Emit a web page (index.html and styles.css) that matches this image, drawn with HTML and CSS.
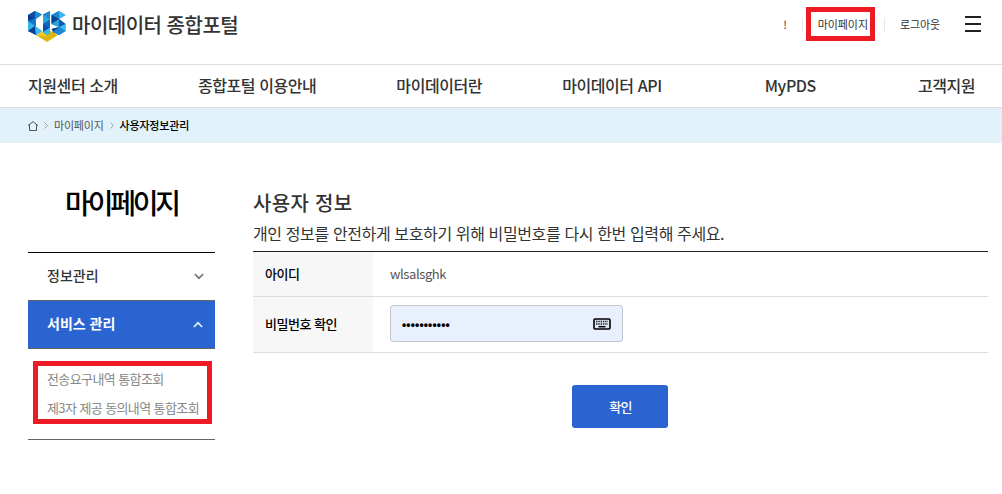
FILE: index.html
```html
<!DOCTYPE html>
<html lang="ko">
<head>
    <meta charset="UTF-8">
    <meta name="viewport" content="width=device-width, initial-scale=1.0">
    <title>마이데이터 종합포털</title>
    <link rel="stylesheet" href="styles.css">
</head>
<body>
    <header class="header">
        <a class="logo" href="#">
            <svg class="logo-mark" width="38" height="31" viewBox="0 0 38 31">
                <path fill="#dcb510" d="M19 18l11 6-11 7-11-7z"/>
                <path fill="#f0cf2c" d="M8 24l11-5v6z"/>
                <path fill="#1a80cf" d="M0 4l7-4 7 3.500L8 8v8l6 4-6 4-8-4zM15 3.500L22 0v22l-3 2-4-3zM23.500 4L31 0l6.500 4L31 8l6.500 5v7L31 24l-6-3-1.500-3 7.500-2-7.500-3z"/>
                <path fill="#0c4ea8" d="M0 4l7-4v8L0 11z"/>
                <path fill="#1c8cd6" d="M7 0l7 3.500L7 8z"/>
                <path fill="#0a3b8c" d="M0 4l7 4-7 3z"/>
                <path fill="#1478c8" d="M0 10l7-3v8z"/>
                <path fill="#35b5ea" d="M0 10l7 5-7 5z"/>
                <path fill="#0b3f95" d="M0 20l7-5 1 9z"/>
                <path fill="#38bdf0" d="M7 15l7 5-6 4z"/>
                <path fill="#1b8ad6" d="M15 3.500L22 0v9z"/>
                <path fill="#29a9e1" d="M15 3.500L22 9l-7 4z"/>
                <path fill="#1268bd" d="M15 13l7-4.500V17z"/>
                <path fill="#0c4ea8" d="M15 13l7 4-7 4z"/>
                <path fill="#35b7ec" d="M15 21l7-4.500V22l-3 2z"/>
                <path fill="#1b85d2" d="M23.500 4L31 0v8z"/>
                <path fill="#36b7ee" d="M31 0l6.500 4L31 8z"/>
                <path fill="#0b438f" d="M23.500 4L31 8l-7.500 5z"/>
                <path fill="#27a4e0" d="M23.500 13L31 8v8z"/>
                <path fill="#0d56ad" d="M31 8l6.500 5-6.500 3z"/>
                <path fill="#38bdf0" d="M31 16l6.500-3v7z"/>
                <path fill="#0c4396" d="M23.500 18l7.500-2v5l-5 1z"/>
                <path fill="#1a88d4" d="M25 21l6-5 6.500 4-6.500 4z"/>
            </svg>
            <span class="logo-text">마이데이터 종합포털</span>
        </a>
        <div class="util">
            <span class="util-name">!</span>
            <a class="util-link marked" href="#">마이페이지</a>
            <a class="util-link" href="#">로그아웃</a>
            <button class="menu-btn" aria-label="전체메뉴"><i></i><i></i><i></i></button>
        </div>
    </header>

    <nav class="gnb">
        <a href="#">지원센터 소개</a>
        <a href="#">종합포털 이용안내</a>
        <a href="#">마이데이터란</a>
        <a href="#">마이데이터 API</a>
        <a class="gnb-wide" href="#">MyPDS</a>
        <a href="#">고객지원</a>
    </nav>

    <div class="breadcrumb">
        <svg class="home" width="10" height="10" viewBox="0 0 10 10"><path d="M0 4.500L5 .7l5 3.800M1.500 3.500v6h7v-6" fill="none" stroke="#555"/></svg>
        <svg class="sep" width="4" height="7" viewBox="0 0 4 7"><path d="M.5.5l3 3-3 3" fill="none" stroke="#98a4ab"/></svg>
        <a href="#">마이페이지</a>
        <svg class="sep" width="4" height="7" viewBox="0 0 4 7"><path d="M.5.5l3 3-3 3" fill="none" stroke="#98a4ab"/></svg>
        <strong>사용자정보관리</strong>
    </div>

    <div class="container">
        <aside class="side">
            <h2 class="side-title">마이페이지</h2>
            <div class="side-menu">
                <a class="side-item" href="#">정보관리
                    <svg width="10" height="7" viewBox="0 0 10 7"><path d="M.8 1L5 5.200 9.200 1" fill="none" stroke="#777" stroke-width="1.700"/></svg>
                </a>
                <a class="side-item active" href="#">서비스 관리
                    <svg width="10" height="7" viewBox="0 0 10 7"><path d="M.8 6L5 1.800 9.200 6" fill="none" stroke="#e4ecfa" stroke-width="1.700"/></svg>
                </a>
                <div class="side-sub">
                    <a href="#">전송요구내역 통합조회</a>
                    <a href="#">제3자 제공 동의내역 통합조회</a>
                </div>
            </div>
        </aside>

        <main class="content">
            <h3 class="title">사용자 정보</h3>
            <p class="desc">개인 정보를 안전하게 보호하기 위해 비밀번호를 다시 한번 입력해 주세요.</p>
            <form class="form">
                <div class="row">
                    <span class="label">아이디</span>
                    <span class="value">wlsalsghk</span>
                </div>
                <div class="row row-pw">
                    <label class="label" for="pw">비밀번호 확인</label>
                    <div class="pw-box">
                        <input type="password" id="pw" value="12345678901">
                        <svg width="18" height="12" viewBox="0 0 18 12">
                            <rect x="1" y="1" width="16" height="10" rx="1" fill="#dfe6f2" stroke="#000" stroke-width="1.600"/>
                            <path d="M3 3.500h12M3 6h12" stroke="#222" stroke-width="1.400" stroke-dasharray="1.400 .9"/>
                            <path d="M5.500 8.700h7" stroke="#000" stroke-width="1.500"/>
                        </svg>
                    </div>
                </div>
                <button type="button" class="submit">확인</button>
            </form>
        </main>
    </div>
</body>
</html>
```
FILE: styles.css
```css
*,
*::before,
*::after {
    box-sizing: border-box;
}

body {
    margin: 0;
    background: #fff;
    color: #333;
    font-family: 'Noto Sans CJK KR', sans-serif;
    line-height: 1.5;
}

a {
    color: inherit;
    text-decoration: none;
}

h2, h3, p {
    margin: 0;
}

.header {
    display: flex;
    justify-content: space-between;
    height: 64px;
    padding: 0 21px 0 28px;
}

.logo {
    display: flex;
    height: 50px;
    align-items: center;
    gap: 6px;
}

.logo-mark {
    margin-top: 2px;
}

.logo-text {
    font-size: 20px;
    font-weight: 500;
    letter-spacing: -0.5px;
    white-space: nowrap;
}

.util {
    display: flex;
    height: 48px;
    align-items: center;
    font-size: 11px;
}

.util-name {
    color: #234;
}

.util-link {
    position: relative;
    margin-left: 15px;
    padding-left: 16px;
    letter-spacing: -0.1px;
}

.util-link::before {
    content: '';
    position: absolute;
    left: 0;
    top: 2px;
    width: 1px;
    height: 13px;
    background: #e8e8e8;
}

.marked {
    margin-right: 1px;
}

.marked::after {
    content: '';
    position: absolute;
    left: 4px;
    top: -9px;
    width: 69px;
    height: 34px;
    border: 5px solid #ed1c24;
}

.menu-btn {
    display: flex;
    flex-direction: column;
    justify-content: space-between;
    width: 16px;
    height: 16px;
    margin-left: 25px;
    padding: 0;
    border: none;
    background: none;
}

.menu-btn i {
    height: 2px;
    background: #222;
}

.gnb {
    display: flex;
    gap: 80px;
    height: 44px;
    padding-left: 28px;
    border-top: 1px solid #ddd;
    border-bottom: 1px solid #ddd;
    font-size: 16px;
    font-weight: 500;
    letter-spacing: -0.42px;
    line-height: 40px;
    white-space: nowrap;
}

.gnb-wide {
    margin: 0 22px 0 23px;
}

.breadcrumb {
    display: flex;
    align-items: center;
    height: 35px;
    padding-left: 28px;
    background: #e1f2fb;
    font-size: 11px;
    letter-spacing: -0.2px;
    color: #555;
}

.breadcrumb .sep {
    margin: 0 6px;
}

.breadcrumb strong {
    font-weight: 500;
    color: #000;
}

.container {
    display: flex;
    gap: 38px;
    padding: 0 14px 0 28px;
}

.side {
    width: 187px;
}

.side-title {
    height: 109px;
    padding-top: 38px;
    font-size: 28px;
    font-weight: 500;
    letter-spacing: -3.2px;
    line-height: 42px;
    text-align: center;
    color: #000;
}

.side-menu {
    border-top: 1px solid #000;
    border-bottom: 1px solid #666;
}

.side-item {
    display: flex;
    align-items: center;
    justify-content: space-between;
    height: 47px;
    padding: 0 11px 3px 19px;
    font-size: 14px;
    font-weight: 500;
}

.side-item svg {
    margin-top: 3px;
}

.side-item.active {
    height: 49px;
    padding-right: 12px;
    border-top: 1px solid #666;
    border-bottom: 1px solid #666;
    background: #2a64d0;
    color: #fff;
    font-weight: 700;
}

.side-sub {
    position: relative;
    display: flex;
    flex-direction: column;
    height: 90px;
    padding: 15px 0 0 19px;
    font-size: 13px;
    letter-spacing: -0.6px;
    line-height: 29px;
    white-space: nowrap;
    color: #888;
}

.side-sub::after {
    content: '';
    position: absolute;
    left: 5px;
    top: 12px;
    width: 179px;
    height: 63px;
    border: 5px solid #ed1c24;
}

.content {
    flex: 1;
    padding-top: 44px;
}

.title {
    font-size: 20px;
    font-weight: 500;
    letter-spacing: 0.3px;
    line-height: 32px;
}

.desc {
    height: 32px;
    font-size: 16px;
    line-height: 29px;
    letter-spacing: -0.38px;
}

.form {
    display: flex;
    flex-direction: column;
    border-top: 1px solid #222;
}

.row {
    display: flex;
    align-items: center;
    height: 45px;
    border-bottom: 1px solid #ddd;
    font-size: 13px;
}

.row-pw {
    height: 56px;
}

.label {
    display: flex;
    align-items: center;
    align-self: stretch;
    width: 120px;
    margin-right: 17px;
    padding-left: 12px;
    background: #f7f7f7;
    color: #000;
    font-weight: 500;
    letter-spacing: -0.5px;
}

.row-pw .label {
    padding-bottom: 2px;
}

.value {
    color: #555;
    letter-spacing: -0.4px;
}

.pw-box {
    display: flex;
    align-items: center;
    width: 233px;
    height: 37px;
    margin-bottom: 3px;
    padding: 0 11px;
    border: 1px solid #c4c6cc;
    border-radius: 3px;
    background: #e8f0fe;
}

.pw-box input {
    flex: 1;
    min-width: 0;
    padding: 3px 0 0;
    border: none;
    outline: none;
    background: none;
    color: #000;
    font: bold 12px 'Liberation Sans', sans-serif;
    letter-spacing: 0.15px;
}

.pw-box svg {
    margin-top: 2px;
}

.submit {
    align-self: center;
    width: 96px;
    height: 43px;
    margin: 32px 2px 0 0;
    padding: 0 0 0 8px;
    border: none;
    border-radius: 3px;
    background: #2a64d0;
    color: #fff;
    font-family: inherit;
    font-size: 13px;
    font-weight: 500;
    letter-spacing: -0.8px;
    text-indent: -6px;
}
```
